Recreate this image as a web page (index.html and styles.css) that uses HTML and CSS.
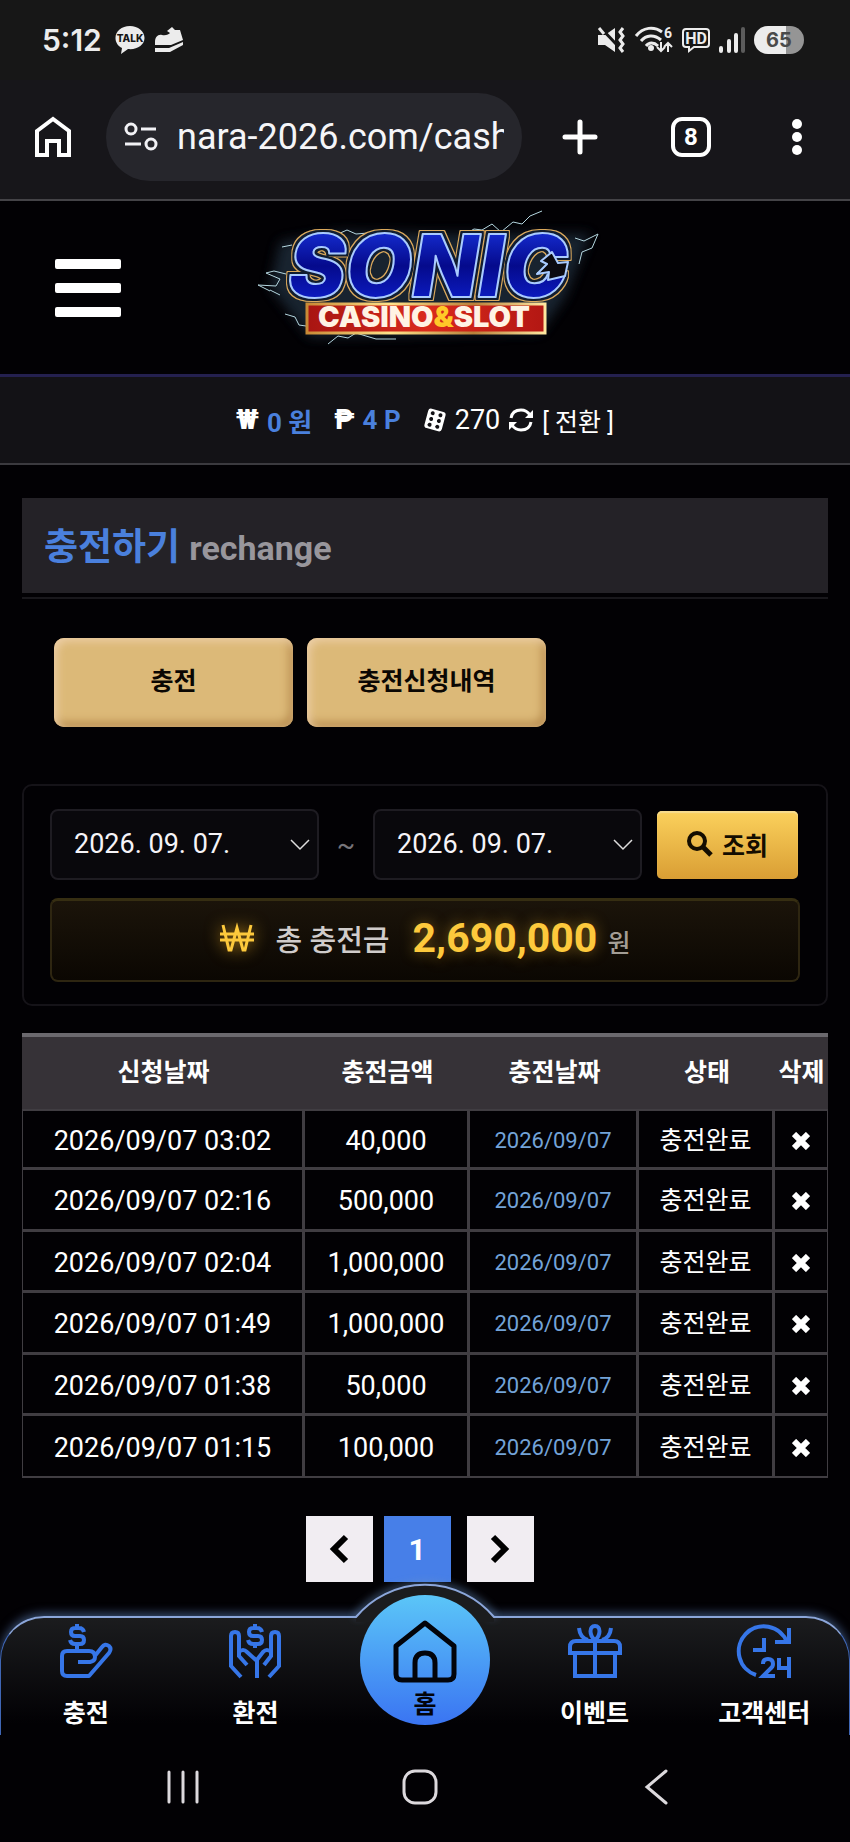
FILE: index.html
```html
<!DOCTYPE html>
<html lang="ko">
<head>
<meta charset="utf-8">
<meta name="viewport" content="width=device-width, initial-scale=1">
<title>충전하기</title>
<link rel="stylesheet" href="styles.css">
</head>
<body>
<svg class="defs" width="0" height="0" aria-hidden="true">
  <symbol id="cross" viewBox="0 0 18 18"><path d="M2 2l14 14M16 2L2 16" stroke="currentColor" stroke-width="6" fill="none"/></symbol>
</svg>

<div class="status">
  <div class="status-side">
    <span class="clock">5:12</span>
    <svg width="30" height="28" viewBox="0 0 30 28"><path d="M15 0C6.500 0 .5 5 .5 12c0 4.500 2.500 8 6.500 10l-1 6 7-5c9 1 16.500-4 16.500-11C29.500 5 23 0 15 0z" fill="#ececec"/><text x="15" y="16" text-anchor="middle" class="talk">TALK</text></svg>
    <svg width="30" height="26" viewBox="0 0 30 26"><path d="M1 15c0-5 3-8 7-7 4 1 7-1 8-2l-3-2 5-4 3 3 5 0 3 10-12 5H1z" fill="#ececec"/><path d="M1 21h14l14-6v3l-13 7H1z" fill="#ececec"/></svg>
  </div>
  <div class="status-side">
    <svg width="28" height="26" viewBox="0 0 28 26" fill="none" stroke="#ececec"><path d="M0 8h7l10-7v24l-10-7H0z" fill="#ececec" stroke="none"/><path d="M2 0l17 18" stroke="#171717" stroke-width="3"/><path d="M1 1l5 6" stroke-width="3"/><path d="M25 1l-3 4 3 4-3 4 3 4-3 4 3 4" stroke-width="3"/></svg>
    <svg width="38" height="28" viewBox="0 0 38 28" fill="none" stroke="#ececec" stroke-width="3"><path d="M1 10C8 1 19 0 27 6M6 15c5-6 13-7 20-1M11 20c3-4 8-4 12 0"/><circle cx="16" cy="22" r="3" fill="#ececec" stroke="none"/><path d="M26 16v9m-4-4 4 4 4-4M33 26v-9m-4 4 4-4 4 4" stroke-width="2"/><text x="33" y="12" text-anchor="middle" class="six">6</text></svg>
    <svg width="28" height="24" viewBox="0 0 28 24" fill="none" stroke="#ececec" stroke-width="2"><path d="M4 1h20q3 0 3 3v12q0 3-3 3H12l-5 4v-4H4q-3 0-3-3V4q0-3 3-3z"/><text x="14" y="16" text-anchor="middle" class="hd">HD</text></svg>
    <svg width="26" height="26" viewBox="0 0 26 26" stroke-width="4" stroke-linecap="round"><path d="M2 21v3M10 14v10M17 8v16" stroke="#ececec"/><path d="M24 2v22" stroke="#5c5c5c"/></svg>
    <span class="battery">65</span>
  </div>
</div>

<div class="browser">
  <button class="tool" aria-label="홈페이지"><svg width="38" height="42" viewBox="0 0 38 42" fill="none" stroke="#fff" stroke-width="4"><path d="M3 15 19 3l16 12v24H25V25H13v14H3z"/></svg></button>
  <div class="address">
    <svg width="34" height="30" viewBox="0 0 34 30" fill="none" stroke="#f1f1f5" stroke-width="3"><circle cx="7" cy="7" r="5"/><path d="M17 7h15M1 22h16"/><circle cx="27" cy="22" r="5"/></svg>
    <input type="text" aria-label="주소" value="nara-2026.com/cash">
  </div>
  <button class="tool" aria-label="새 탭"><svg width="36" height="36" viewBox="0 0 36 36" stroke="#fff" stroke-width="5" stroke-linecap="round"><path d="M18 3v30M3 18h30"/></svg></button>
  <button class="tool" aria-label="탭 목록"><span class="tabs">8</span></button>
  <button class="tool" aria-label="메뉴"><svg width="10" height="36" viewBox="0 0 10 36" fill="#fff"><circle cx="5" cy="5" r="5"/><circle cx="5" cy="18" r="5"/><circle cx="5" cy="31" r="5"/></svg></button>
</div>

<header class="site">
  <button class="burger" aria-label="메뉴 열기"><i></i><i></i><i></i></button>
  <svg class="logo" width="380" height="172" viewBox="0 0 380 172" role="img" aria-label="SONIC CASINO&amp;SLOT">
    <defs>
      <linearGradient id="blue" x1="0" y1="0" x2="0" y2="1"><stop offset="0" stop-color="#1c3cf0"/><stop offset=".5" stop-color="#050a8c"/><stop offset="1" stop-color="#0f25dd"/></linearGradient>
      <linearGradient id="red" x1="0" y1="0" x2="1" y2="0"><stop offset="0" stop-color="#a81512"/><stop offset=".5" stop-color="#d92a1c"/><stop offset="1" stop-color="#b31713"/></linearGradient>
      <linearGradient id="gold" x1="0" y1="0" x2="1" y2="0"><stop offset="0" stop-color="#c98a35"/><stop offset=".35" stop-color="#ffe28a"/><stop offset=".7" stop-color="#b9813a"/><stop offset="1" stop-color="#ffe7a0"/></linearGradient>
      <filter id="soft" x="-20%" y="-20%" width="140%" height="140%"><feGaussianBlur stdDeviation="6"/></filter>
      <filter id="rim" x="-10%" y="-20%" width="120%" height="140%" color-interpolation-filters="sRGB">
        <feMorphology in="SourceAlpha" operator="dilate" radius="2" result="inner"/>
        <feMorphology in="SourceAlpha" operator="dilate" radius="3" result="outer"/>
        <feFlood flood-color="#101d31"/><feComposite in2="inner" operator="in" result="navy"/>
        <feFlood flood-color="#dba95c"/><feComposite in2="outer" operator="in" result="golden"/>
        <feMerge><feMergeNode in="golden"/><feMergeNode in="navy"/><feMergeNode in="SourceGraphic"/></feMerge>
      </filter>
    </defs>
    <path d="M40 40 100 30 220 32 350 32 325 95 300 130 70 135 30 85z" fill="#2c4152" opacity=".55" filter="url(#soft)"/>
    <path d="M98 32l9-4 9 4 12-1M222 34l12-7 8 1 10-6 9 8 12-10 9 2 8-8 12-5M335 36l9 3 14-7-6 14-10 4-3 12M46 72l-12-3-8 2 14 6-4 7-18-1 12 6M30 88l10 5M64 32l2 6M42 45l10-2M45 112l10 3 4 8 7 1M88 142l10-8 10 2 8-5 20 6 20 0" fill="none" stroke="#b5d7e0" stroke-width="1" stroke-linejoin="round"/>
    <text class="sonic" x="188" y="95" text-anchor="middle" fill="url(#blue)" filter="url(#rim)">SONIC</text>
    <path d="M312 50l-11 9 6 3-10 10 12-2-1 8 17-4 3-14-10 1z" fill="#0b0a10" stroke="#a9cbff" stroke-width="2" stroke-linejoin="round"/>
    <rect x="67" y="102" width="238" height="29" fill="url(#red)" stroke="url(#gold)" stroke-width="3"/>
    <text class="casino" x="184" y="125" text-anchor="middle">CASINO<tspan fill="#ffc928">&amp;</tspan>SLOT</text>
  </svg>
</header>

<div class="wallet">
  <span class="coin">₩</span><b>0 원</b>
  <span class="coin peso">₱</span><b>4 P</b>
  <svg class="dice" width="24" height="24" viewBox="0 0 24 24"><g transform="rotate(15 12 12)"><rect x="3" y="2" width="18" height="20" rx="3" fill="#fff"/><g fill="#131216"><circle cx="8" cy="6" r="2"/><circle cx="16" cy="6" r="2"/><circle cx="8" cy="12" r="2"/><circle cx="16" cy="12" r="2"/><circle cx="8" cy="18" r="2"/><circle cx="16" cy="18" r="2"/></g></g></svg>
  <span>270</span>
  <svg class="swap" width="26" height="26" viewBox="0 0 26 26" fill="none" stroke="#fff" stroke-width="3"><path d="M3 11C4 5 8 3 13 3c4 0 7 2 9 5M23 15c-1 6-5 8-10 8-4 0-7-2-9-5"/><path d="M25 3v8h-8zM1 23v-8h8z" fill="#fff" stroke="none"/></svg>
  <a href="#convert">[ 전환 ]</a>
</div>

<main>
  <h1>충전하기 <small>rechange</small></h1>
  <div class="tabs-row">
    <button>충전</button>
    <button>충전신청내역</button>
  </div>

  <section class="search">
    <form class="range">
      <select aria-label="시작일"><option>2026. 09. 07.</option></select>
      <span class="tilde">~</span>
      <select aria-label="종료일"><option>2026. 09. 07.</option></select>
      <button type="button"><svg width="26" height="26" viewBox="0 0 26 26" fill="none" stroke="#140d00" stroke-width="4"><circle cx="10" cy="10" r="8"/><path d="M16 16l8 8" stroke-width="5"/></svg>조회</button>
    </form>
    <div class="total">
      <svg width="34" height="28" viewBox="0 0 34 28" fill="none" stroke="#fdc93c" stroke-width="3"><path d="M3 1l6 25h2l6-22 6 22h2l6-25M0 10h34M0 16h34"/></svg>
      <span class="label">총 충전금</span>
      <strong>2,690,000</strong>
      <span class="unit">원</span>
    </div>
  </section>

  <table>
    <colgroup><col class="c1"><col class="c2"><col class="c3"><col class="c4"><col class="c5"></colgroup>
    <thead><tr><th>신청날짜</th><th>충전금액</th><th>충전날짜</th><th>상태</th><th>삭제</th></tr></thead>
    <tbody>
      <tr><td>2026/09/07 03:02</td><td>40,000</td><td class="date">2026/09/07</td><td class="state">충전완료</td><td><button aria-label="삭제"><svg width="18" height="18"><use href="#cross"/></svg></button></td></tr>
      <tr><td>2026/09/07 02:16</td><td>500,000</td><td class="date">2026/09/07</td><td class="state">충전완료</td><td><button aria-label="삭제"><svg width="18" height="18"><use href="#cross"/></svg></button></td></tr>
      <tr><td>2026/09/07 02:04</td><td>1,000,000</td><td class="date">2026/09/07</td><td class="state">충전완료</td><td><button aria-label="삭제"><svg width="18" height="18"><use href="#cross"/></svg></button></td></tr>
      <tr><td>2026/09/07 01:49</td><td>1,000,000</td><td class="date">2026/09/07</td><td class="state">충전완료</td><td><button aria-label="삭제"><svg width="18" height="18"><use href="#cross"/></svg></button></td></tr>
      <tr><td>2026/09/07 01:38</td><td>50,000</td><td class="date">2026/09/07</td><td class="state">충전완료</td><td><button aria-label="삭제"><svg width="18" height="18"><use href="#cross"/></svg></button></td></tr>
      <tr><td>2026/09/07 01:15</td><td>100,000</td><td class="date">2026/09/07</td><td class="state">충전완료</td><td><button aria-label="삭제"><svg width="18" height="18"><use href="#cross"/></svg></button></td></tr>
    </tbody>
  </table>

  <div class="pages">
    <a href="#prev" aria-label="이전"><svg width="20" height="28" viewBox="0 0 20 28" fill="none" stroke="#000" stroke-width="6"><path d="M17 2 5 14l12 12"/></svg></a>
    <a href="#1" class="current">1</a>
    <a href="#next" class="next" aria-label="다음"><svg width="20" height="28" viewBox="0 0 20 28" fill="none" stroke="#000" stroke-width="6"><path d="M3 2l12 12L3 26"/></svg></a>
  </div>
</main>

<nav class="dock">
  <svg class="bump" width="180" height="64" viewBox="0 0 180 64">
    <defs><filter id="glow" x="-20%" y="-50%" width="140%" height="200%"><feGaussianBlur stdDeviation="4"/></filter></defs>
    <path d="M21 43A90 90 0 0 1 159 43" fill="none" stroke="#6b93c4" stroke-width="5" opacity=".7" filter="url(#glow)"/>
    <path d="M21 43A90 90 0 0 1 159 43V48H21z" fill="#1b1c1e"/>
    <path d="M20 43H21A90 90 0 0 1 159 43H160" fill="none" stroke="#8ba6da" stroke-width="2"/>
  </svg>
  <a href="#deposit"><svg width="54" height="54" viewBox="0 0 54 54" fill="none" stroke="#3676e8" stroke-width="4" stroke-linejoin="round"><path d="M25 8q-1-4-5-4h-4q-4 0-4 4t4 4h5q4 0 4 4t-4 4h-5q-4 0-5-4M18 0v4M18 20v6"/><path d="M19 38h12q5-1 5-5 0-6-6-6H8q-5 0-5 5v15q0 5 5 5h22l20-23q3-4 0-7-4-3-7 1l-8 10"/></svg>충전</a>
  <a href="#withdraw"><svg width="54" height="54" viewBox="0 0 54 54" fill="none" stroke="#3676e8" stroke-width="4"><path d="M34 8q-1-4-5-4h-4q-4 0-4 4t4 4h5q4 0 4 4t-4 4h-5q-4 0-5-4M27 0v4M27 20v4"/><path d="M13 53 3 42V12q0-4 4-4t4 4v20l8 9M11 28q4-4 8 0l10 9v17M41 53l10-11V12q0-4-4-4t-4 4v20l-7 9M43 28q-4-4-8 0l-7 9"/></svg>환전</a>
  <a href="#home" class="home"><svg width="64" height="64" viewBox="0 0 64 64" fill="none" stroke="#02040a" stroke-width="5" stroke-linejoin="round"><path d="M3 27 32 4l29 23v28q0 6-6 6H9q-6 0-6-6zM22 61V44q0-10 10-10t10 10v17"/></svg>홈</a>
  <a href="#event"><svg width="54" height="54" viewBox="0 0 54 54" fill="none" stroke="#3676e8" stroke-width="4"><path d="M7 30v22h40V30M27 17v35M2 29V23q0-6 6-6h38q6 0 6 6v6zM11 4q1 10 9 12M43 4q-1 10-9 12"/><path d="M27 16c-6-5-6-14 0-14s6 9 0 14z"/></svg>이벤트</a>
  <a href="#support"><svg width="54" height="54" viewBox="0 0 54 54" fill="none" stroke="#3676e8" stroke-width="4"><path d="M19 51A25 25 0 1 1 50 18M52 4v14H38M27 14v12H16"/><path d="M26 40q0-5 5-5t5 5q0 3-3 5l-7 7h12M42 34v10h10M52 33v21"/></svg>고객센터</a>
</nav>

<div class="system">
  <button aria-label="최근 앱"><svg width="34" height="36" viewBox="0 0 34 36" stroke="#dcd9dd" stroke-width="3" stroke-linecap="round"><path d="M3 3v30M17 3v30M31 3v30"/></svg></button>
  <button aria-label="홈 화면"><svg width="38" height="38" viewBox="0 0 38 38" fill="none" stroke="#dcd9dd" stroke-width="3"><rect x="3" y="3" width="32" height="32" rx="11"/></svg></button>
  <button aria-label="뒤로"><svg width="26" height="38" viewBox="0 0 26 38" fill="none" stroke="#dcd9dd" stroke-width="3" stroke-linecap="round"><path d="M22 3 3 19l19 16"/></svg></button>
</div>
</body>
</html>
```

FILE: styles.css
```css
* { box-sizing: border-box; }

body {
  margin: 0;
  background: #020104;
  color: #fff;
  font-family: Roboto, "Noto Sans CJK KR", sans-serif;
  font-size: 27px;
}

button, input, select { font: inherit; color: inherit; }
button { border: 0; padding: 0; background: none; }
a { color: inherit; text-decoration: none; }
svg { display: block; flex: none; overflow: visible; }
.defs { position: absolute; }

/* phone status bar */
.status {
  display: flex;
  justify-content: space-between;
  align-items: center;
  height: 80px;
  padding: 0 46px 0 42px;
  background: #171717;
  color: #ececec;
}
.status-side { display: flex; align-items: center; gap: 9px; }
.clock { font: 600 30px/36px Inter, sans-serif; margin-right: 4px; }
.talk { font: 800 10px Inter, sans-serif; fill: #171717; }
.six { font: 700 14px Roboto, sans-serif; fill: #ececec; stroke: none; }
.hd { font: 700 16px Roboto, sans-serif; fill: #ececec; stroke: none; }
.battery {
  width: 50px;
  border-radius: 14px;
  background: linear-gradient(90deg, #ececec 64%, #959595 64%);
  color: #4a4a4a;
  font: 700 20px/28px Inter, sans-serif;
  text-align: center;
}

/* browser toolbar */
.browser {
  display: grid;
  grid-template-columns: 106px minmax(0, 1fr) 116px 106px 106px;
  align-items: center;
  padding: 13px 0 18px;
  background: #17161a;
  border-bottom: 2px solid #444347;
}
.tool { display: flex; justify-content: center; align-items: center; }
.address {
  display: flex;
  align-items: center;
  gap: 19px;
  height: 88px;
  padding: 0 18px;
  border-radius: 44px;
  background: #26262c;
}
.address input {
  flex: 1;
  min-width: 0;
  padding: 0;
  border: 0;
  outline: 0;
  background: none;
  color: #f5f5f8;
  font-size: 36px;
}
.tabs {
  width: 40px;
  height: 40px;
  border: 4px solid #fff;
  border-radius: 11px;
  font: 700 24px/32px Roboto, sans-serif;
}

/* site header */
.site {
  display: grid;
  grid-template-columns: 1fr auto 1fr;
  align-items: center;
  height: 173px;
  padding: 0 45px 0 55px;
}
.burger { display: grid; gap: 14px; width: 66px; }
.burger i { height: 10px; border-radius: 2px; background: #fff; }
.sonic {
  font: italic 900 86px Inter, sans-serif;
  stroke: #a9cbff;
  stroke-width: 2px;
  stroke-linejoin: round;
}
.casino { font: 900 29px Inter, sans-serif; fill: #fff3e4; }

.wallet {
  display: flex;
  justify-content: center;
  align-items: center;
  gap: 8px;
  height: 91px;
  border-top: 3px solid #24204f;
  border-bottom: 2px solid #3b3a3f;
  background: #131216;
  font-size: 27px;
}
.wallet b { color: #4a80dd; font-size: 26px; }
.coin { font-weight: 900; }
.peso, .dice { margin-left: 14px; }
.wallet a { font-size: 25px; }

/* page */
main { padding: 33px 22px 0; }
h1 {
  position: relative;
  margin: 0;
  padding: 5px 22px 0;
  background: #242227;
  color: #4a80dd;
  font-size: 37px;
  line-height: 90px;
}
h1::after {
  content: "";
  position: absolute;
  inset: auto 0 -6px;
  height: 2px;
  background: #19181c;
}
h1 small { color: #98969c; font-size: 34px; }

.tabs-row { display: flex; gap: 14px; padding: 45px 32px 57px; }
.tabs-row button {
  flex: 0 1 239px;
  height: 89px;
  padding-bottom: 7px;
  border-radius: 10px;
  background: #dcb978;
  box-shadow: inset 3px 3px 8px #edcfa8, inset -4px -5px 8px #b98e50;
  color: #0b0703;
  font-size: 25px;
  font-weight: 700;
}

.search {
  padding: 23px 26px 22px;
  border: 2px solid #151318;
  border-radius: 10px;
}
.range { display: flex; align-items: center; padding-right: 2px; }
.range select {
  appearance: none;
  flex: 1;
  min-width: 0;
  height: 71px;
  padding: 0 22px 2px;
  border: 2px solid #1e1c22;
  border-radius: 8px;
  background: #09080c url("data:image/svg+xml,%3Csvg xmlns='http://www.w3.org/2000/svg' width='20' height='12' fill='none' stroke='%23dddddd' stroke-width='1.500'%3E%3Cpath d='M1 1l9 9 9-9'/%3E%3C/svg%3E") no-repeat right 7px center;
  color: #f6f4f8;
}
.tilde { width: 54px; color: #77757b; text-align: center; }
.range button {
  display: flex;
  justify-content: center;
  align-items: center;
  gap: 9px;
  width: 141px;
  height: 68px;
  margin-left: 15px;
  padding-bottom: 2px;
  border-radius: 5px;
  background: linear-gradient(#fbd15c, #d99e34);
  box-shadow: inset 0 2px 1px #f8dc8e;
  color: #140d00;
  font-size: 25px;
  font-weight: 700;
}
.total {
  display: flex;
  justify-content: center;
  align-items: center;
  height: 84px;
  padding-bottom: 6px;
  margin-top: 18px;
  border: 2px solid #2e2611;
  border-top: 3px solid #362e12;
  border-radius: 8px;
  background: linear-gradient(#1b140a, #0b0702);
}
.total svg { filter: drop-shadow(0 0 8px #a87a18); }
.label { margin: 0 23px 0 22px; color: #d0cccb; font-size: 29px; font-weight: 500; }
.total strong { color: #fdc93c; font-size: 41px; text-shadow: 0 0 14px #80601a; }
.unit { margin: 6px 0 0 10px; color: #a39d95; font-size: 25px; font-weight: 500; }

table {
  width: 100%;
  margin-top: 27px;
  border-spacing: 0;
  table-layout: fixed;
  text-align: center;
}
.c1 { width: 283px; }
.c2 { width: 165px; }
.c3 { width: 169px; }
.c4 { width: 136px; }
.c5 { width: 53px; }
th {
  height: 76px;
  padding: 0 0 7px;
  border-top: 4px solid #6b696e;
  background: #363237;
  font-size: 25px;
  white-space: nowrap;
}
td {
  height: 61px;
  padding: 3px 0 0;
  border: solid #403d42;
  border-width: 0 3px 3px 0;
  line-height: 32px;
}
tr:nth-child(even) td { height: 62px; }
td:first-child { border-left-width: 1px; }
td:last-child { border-right-width: 1px; }
tbody tr:first-child td { border-top-width: 2px; }
tbody tr:last-child td { border-bottom-width: 2px; }
.date { color: #73a3d8; font-size: 22px; }
.state { font-size: 25px; }
td button { display: inline-block; }

.pages { display: flex; justify-content: center; gap: 11px; padding: 38px 11px 34px 0; }
.pages a {
  display: grid;
  place-items: center;
  width: 67px;
  height: 66px;
  background: #f1edf2;
}
.pages .current { background: #477fe8; font-size: 30px; font-weight: 700; }
.pages .next { margin-left: 5px; }

/* bottom navigation */
.dock {
  position: relative;
  display: grid;
  grid-template-columns: repeat(5, 1fr);
  height: 119px;
  border: 1px solid #3f66b4;
  border-top: 2px solid #8ba6da;
  border-bottom: 0;
  border-radius: 44px 44px 0 0;
  background: linear-gradient(#1b1c1e, #020104 90%);
  box-shadow: 0 -3px 10px #35496a;
}
.bump { position: absolute; left: calc(50% - 90px); top: -44px; }
.dock a {
  display: flex;
  flex-direction: column;
  align-items: center;
  gap: 18px;
  padding-top: 6px;
  font-size: 25px;
  font-weight: 700;
  line-height: 36px;
  white-space: nowrap;
}
.dock .home {
  position: relative;
  justify-self: center;
  gap: 4px;
  width: 130px;
  height: 130px;
  margin-top: -23px;
  padding-top: 24px;
  border-radius: 50%;
  background: linear-gradient(#5bc6f8, #3a74f2);
  color: #02040a;
}

/* system navigation */
.system {
  position: relative;
  display: grid;
  grid-template-columns: repeat(3, 1fr);
  height: 107px;
  padding: 0 74px 3px 64px;
  background: #020104;
}
.system button { display: flex; justify-content: center; align-items: center; }
```
